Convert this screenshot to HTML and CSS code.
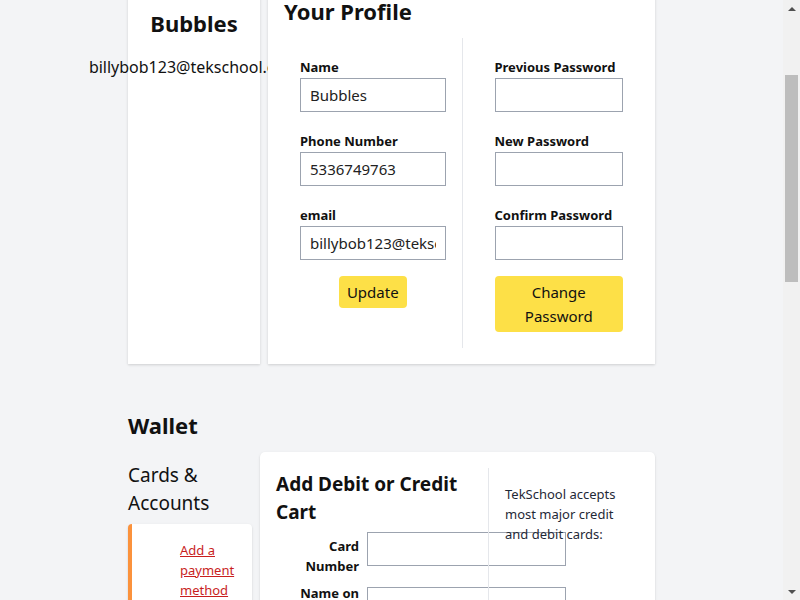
FILE: index.html
```html
<!DOCTYPE html>
<html lang="en">
<head>
<meta charset="utf-8">
<title>Account</title>
<link rel="stylesheet" href="styles.css">
</head>
<body>
<div class="viewport" id="viewport">
<main class="page">
  <section class="profile-row">
    <aside class="card card-square user-card">
      <h2 class="user-name">Bubbles</h2>
      <p class="user-email">billybob123@tekschool.com</p>
    </aside>
    <div class="card card-square profile-card">
      <h1 class="profile-title">Your Profile</h1>
      <div class="profile-cols">
        <form class="profile-col col-left">
          <div class="field">
            <label class="field-label">Name</label>
            <input class="field-input" type="text" value="Bubbles">
          </div>
          <div class="field">
            <label class="field-label">Phone Number</label>
            <input class="field-input" type="text" value="5336749763">
          </div>
          <div class="field">
            <label class="field-label">email</label>
            <input class="field-input" type="text" value="billybob123@tekschool.com">
          </div>
          <button class="btn btn-update" type="button">Update</button>
        </form>
        <form class="profile-col col-right">
          <div class="field">
            <label class="field-label">Previous Password</label>
            <input class="field-input" type="password">
          </div>
          <div class="field">
            <label class="field-label">New Password</label>
            <input class="field-input" type="password">
          </div>
          <div class="field">
            <label class="field-label">Confirm Password</label>
            <input class="field-input" type="password">
          </div>
          <button class="btn btn-block" type="button">Change Password</button>
        </form>
      </div>
    </div>
  </section>

  <section class="wallet">
    <h2 class="wallet-title">Wallet</h2>
    <div class="wallet-grid">
      <div class="wallet-side">
        <h3 class="side-title">Cards &amp; Accounts</h3>
        <div class="card add-card">
          <a class="add-link" href="#">Add a payment method</a>
        </div>
      </div>
      <div class="card cc-card">
        <div class="cc-form">
          <h3 class="cc-title">Add Debit or Credit Cart</h3>
          <div class="cc-row">
            <label class="cc-label cc-label-top">Card Number</label>
            <input class="cc-input" type="text">
          </div>
          <div class="cc-row cc-row-next">
            <label class="cc-label">Name on Card</label>
            <input class="cc-input cc-input-low" type="text">
          </div>
          <div class="cc-row cc-row-next">
            <label class="cc-label">Expiration Date</label>
            <input class="cc-input cc-input-low" type="text">
          </div>
        </div>
        <div class="cc-info">
          <p class="cc-note">TekSchool accepts most major credit and debit cards:</p>
        </div>
      </div>
    </div>
  </section>
</main>
</div>
<div class="scrollbar" aria-hidden="true">
  <div class="sb-arrow sb-up"></div>
  <div class="sb-track">
    <div class="sb-thumb"></div>
  </div>
  <div class="sb-arrow sb-down"></div>
</div>
<script src="script.js"></script>
</body>
</html>
```

FILE: styles.css
```css
html, body {
  margin: 0;
  padding: 0;
}
body {
  background: #f3f4f6;
  color: #111111;
  font-family: "Noto Sans", "Open Sans", sans-serif;
  font-size: 16px;
  line-height: 24px;
  display: flex;
  height: 600px;
  overflow: hidden;
}
.viewport {
  flex: 1;
  height: 600px;
  overflow: hidden;
}
.page {
  width: 527px;
  margin: 0 auto;
  padding-top: 148px;
  min-height: 1640px;
  box-sizing: border-box;
}

/* scrollbar */
.scrollbar {
  width: 17px;
  flex-shrink: 0;
  height: 600px;
  background: #f1f1f1;
  display: flex;
  flex-direction: column;
}
.sb-arrow {
  height: 17px;
  display: flex;
  align-items: center;
  justify-content: center;
}
.sb-up::before,
.sb-down::before {
  content: "";
  width: 0;
  height: 0;
  border-left: 4px solid transparent;
  border-right: 4px solid transparent;
}
.sb-up::before {
  border-bottom: 4px solid #505050;
}
.sb-down::before {
  border-top: 4px solid #505050;
}
.sb-track {
  flex: 1;
  padding-top: 58px;
}
.sb-thumb {
  margin: 0 2px;
  height: 207px;
  background: #bdbdbd;
}

.card {
  background: #ffffff;
  border-radius: 5px;
  box-shadow: 0 1px 3px rgba(0, 0, 0, 0.1), 0 1px 2px rgba(0, 0, 0, 0.06);
}
.card-square {
  border-radius: 0;
}
.profile-row {
  display: flex;
  gap: 8px;
  align-items: stretch;
}
.user-card {
  width: 132px;
  flex-shrink: 0;
  display: flex;
  flex-direction: column;
  align-items: center;
  padding-top: 28px;
  box-sizing: border-box;
}
.user-name {
  margin: 0;
  font-size: 22px;
  line-height: 30px;
  font-weight: 700;
}
.user-email {
  margin: 17px 0 0;
  white-space: nowrap;
  font-size: 16px;
  line-height: 24px;
}
.profile-card {
  flex: 1;
  padding: 16px;
}
.profile-title {
  margin: 0;
  font-size: 22px;
  line-height: 30px;
  font-weight: 700;
}
.profile-cols {
  margin-top: 12px;
  display: grid;
  grid-template-columns: 1fr 1fr;
}
.profile-col {
  margin: 0;
  display: flex;
  flex-direction: column;
}
.col-left {
  padding: 19px 16px 16px 16px;
}
.col-right {
  padding: 19px 16px 16px 32px;
  border-left: 1px solid #e5e7eb;
}
.field {
  display: flex;
  flex-direction: column;
  margin-bottom: 19px;
}
.field:last-of-type {
  margin-bottom: 16px;
}
.field-label {
  font-size: 13px;
  line-height: 20px;
  font-weight: 700;
  margin-bottom: 1px;
}
.field-input {
  height: 34px;
  box-sizing: border-box;
  border: 1px solid #9ca3af;
  border-radius: 0;
  padding: 0 9px;
  font-family: inherit;
  font-size: 15px;
  color: #222222;
  background: #ffffff;
  width: 100%;
  min-width: 0;
}
.btn {
  font-family: inherit;
  font-size: 15px;
  line-height: 24px;
  color: #111111;
  background: #fde047;
  border: none;
  border-radius: 4px;
  padding: 4px 8px;
  cursor: pointer;
}
.btn-update {
  align-self: center;
}
.btn-block {
  width: 100%;
  padding: 4px 12px;
}
.wallet {
  margin-top: 45px;
}
.wallet-title {
  margin: 0;
  font-size: 22px;
  line-height: 32px;
  font-weight: 700;
}
.wallet-grid {
  margin-top: 11px;
  display: flex;
  gap: 8px;
  align-items: flex-start;
}
.wallet-side {
  width: 124px;
  flex-shrink: 0;
  padding-top: 9px;
}
.side-title {
  margin: 0;
  font-size: 19px;
  line-height: 28px;
  font-weight: 400;
}
.add-card {
  margin-top: 7px;
  border-left: 4px solid #fb923c;
  border-radius: 4px;
  padding: 16px 10px 16px 48px;
  height: 120px;
  line-height: 20px;
  font-size: 13px;
}
.add-link {
  font-size: 13px;
  line-height: 20px;
  color: #c81e1e;
  text-decoration: underline;
}
.cc-card {
  flex: 1;
  padding: 16px;
  display: flex;
  min-height: 400px;
}
.cc-form {
  width: 212px;
  flex-shrink: 0;
}
.cc-title {
  margin: 0 0 6px;
  padding-top: 2px;
  font-size: 19px;
  line-height: 28px;
  font-weight: 700;
}
.cc-row {
  display: flex;
  gap: 8px;
  align-items: flex-start;
}
.cc-row-next {
  margin-top: 7px;
}
.cc-label {
  width: 83px;
  flex-shrink: 0;
  text-align: right;
  font-size: 13px;
  line-height: 20px;
  font-weight: 700;
}
.cc-label-top {
  padding-top: 4px;
}
.cc-input {
  width: 199px;
  height: 34px;
  flex-shrink: 0;
  box-sizing: border-box;
  border: 1px solid #9ca3af;
  background: #ffffff;
  padding: 0 8px;
  font-family: inherit;
  font-size: 15px;
}
.cc-input-low {
  margin-top: 4px;
}
.cc-info {
  flex: 1;
  border-left: 1px solid #e5e7eb;
  padding: 16px 0 0 16px;
}
.cc-note {
  margin: 0;
  font-size: 13px;
  line-height: 20px;
  color: #1f2937;
}
```

FILE: script.js
```js
(function () {
  var vp = document.getElementById('viewport');
  function apply() { vp.scrollTop = 168; }
  apply();
  window.addEventListener('load', apply);
})();
```
